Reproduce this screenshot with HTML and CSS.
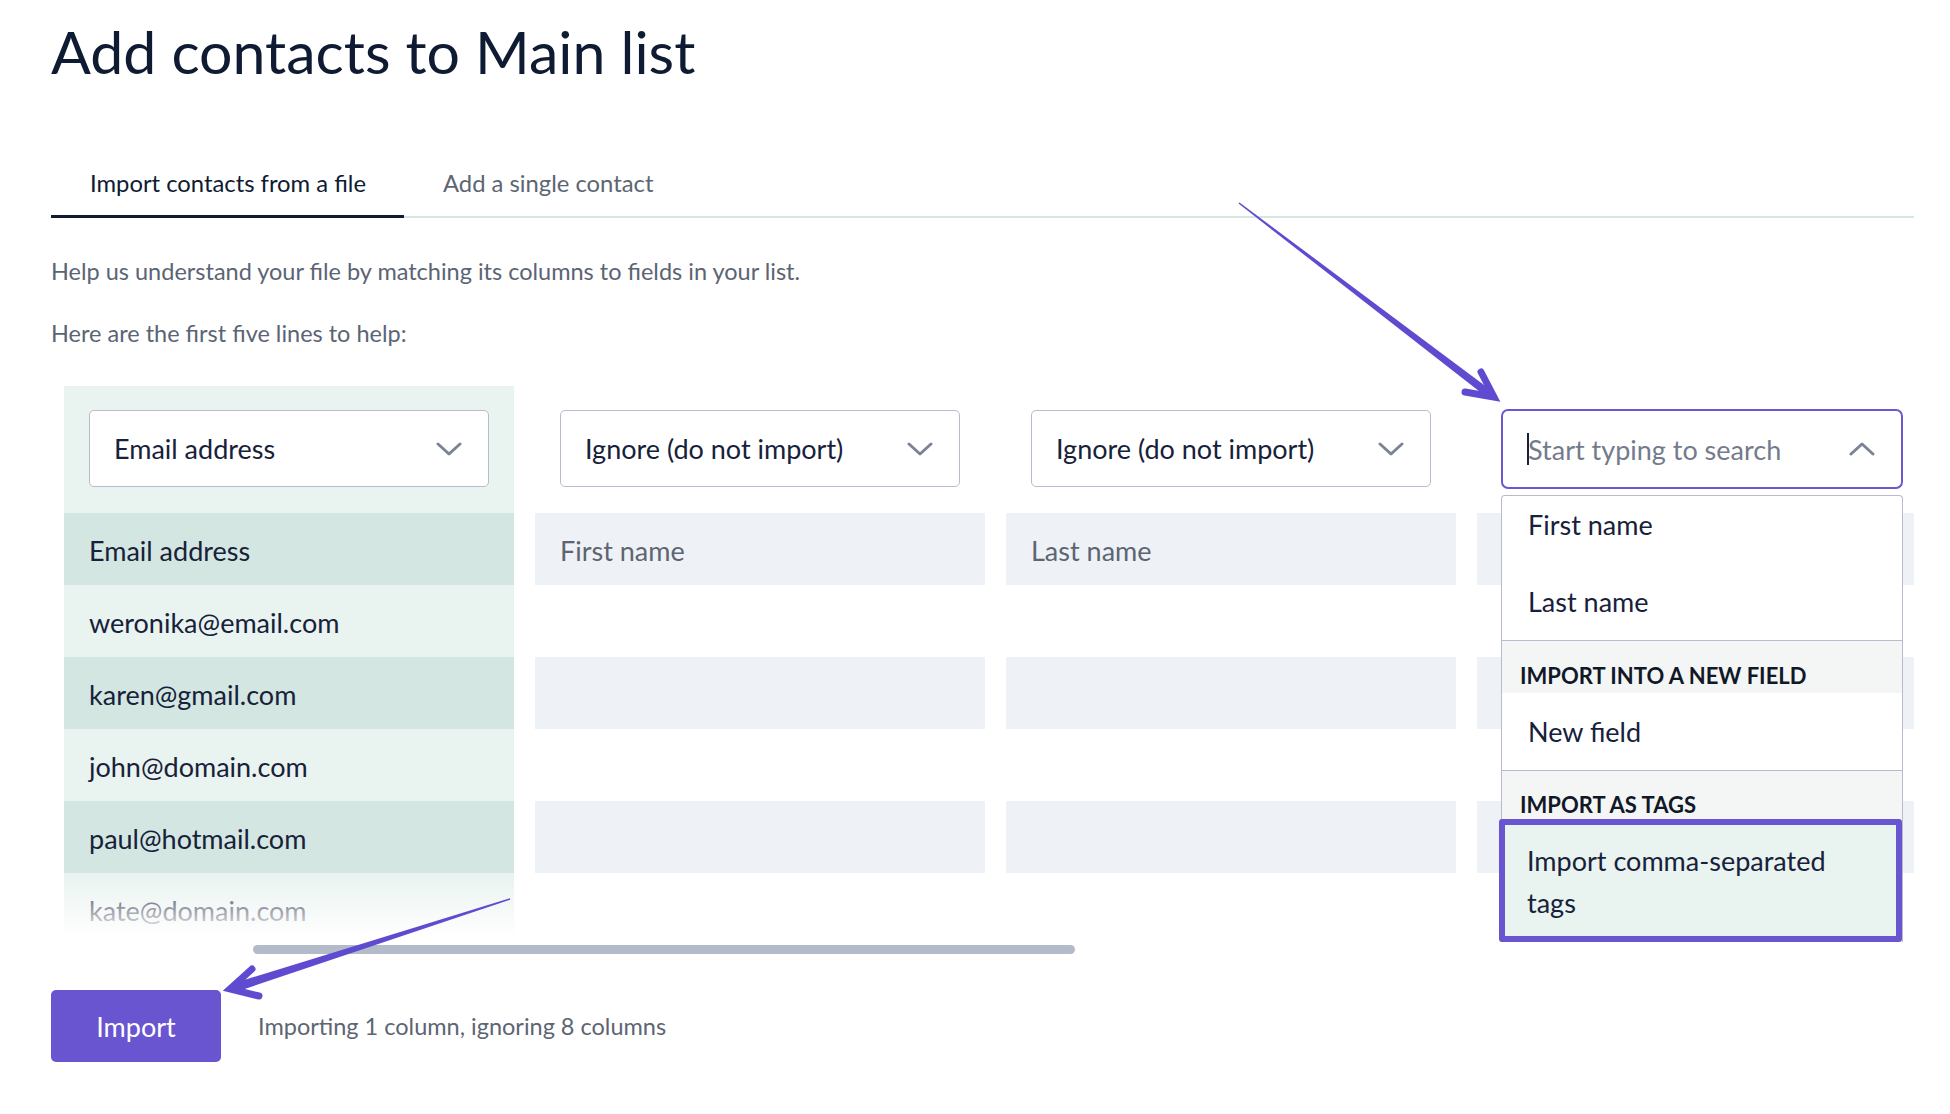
FILE: index.html
```html
<!DOCTYPE html>
<html lang="en">
<head>
  <meta charset="UTF-8">
  <title>Add contacts to Main list</title>
  <link rel="stylesheet" href="styles.css">
</head>
<body>
  <main class="page">
    <h1 class="title">Add contacts to Main list</h1>

    <nav class="tabs">
      <a class="tab tab-active">Import contacts from a file</a>
      <a class="tab">Add a single contact</a>
    </nav>

    <p class="hint">Help us understand your file by matching its columns to fields in your list.</p>
    <p class="hint hint-second">Here are the first five lines to help:</p>

    <div class="mapper">
      <div class="columns">
        <!-- mapped column -->
        <div class="col col-mapped">
          <div class="select">
            <span>Email address</span>
            <svg class="chevron" width="26" height="14" viewBox="0 0 26 14"><polyline points="2,2 13,12 24,2"/></svg>
          </div>
          <div class="cell stripe">Email address</div>
          <div class="cell">weronika@email.com</div>
          <div class="cell stripe">karen@gmail.com</div>
          <div class="cell">john@domain.com</div>
          <div class="cell stripe">paul@hotmail.com</div>
          <div class="cell">kate@domain.com</div>
        </div>

        <div class="col">
          <div class="select">
            <span>Ignore (do not import)</span>
            <svg class="chevron" width="26" height="14" viewBox="0 0 26 14"><polyline points="2,2 13,12 24,2"/></svg>
          </div>
          <div class="cell stripe cell-muted">First name</div>
          <div class="cell"></div>
          <div class="cell stripe"></div>
          <div class="cell"></div>
          <div class="cell stripe"></div>
          <div class="cell"></div>
        </div>

        <div class="col">
          <div class="select">
            <span>Ignore (do not import)</span>
            <svg class="chevron" width="26" height="14" viewBox="0 0 26 14"><polyline points="2,2 13,12 24,2"/></svg>
          </div>
          <div class="cell stripe cell-muted">Last name</div>
          <div class="cell"></div>
          <div class="cell stripe"></div>
          <div class="cell"></div>
          <div class="cell stripe"></div>
          <div class="cell"></div>
        </div>

        <!-- column with open picker -->
        <div class="col col-open">
          <div class="search">
            <span class="caret"></span>
            <span class="placeholder">Start typing to search</span>
            <svg class="chevron" width="26" height="14" viewBox="0 0 26 14"><polyline points="2,12 13,2 24,12"/></svg>
          </div>
          <div class="cell stripe"></div>
          <div class="cell"></div>
          <div class="cell stripe"></div>
          <div class="cell"></div>
          <div class="cell stripe"></div>
          <div class="cell"></div>

          <div class="dropdown">
            <div class="option option-top">First name</div>
            <div class="option option-top option-last">Last name</div>
            <div class="group">Import into a new field</div>
            <div class="option">New field</div>
            <div class="group group-tags">Import as tags</div>
            <div class="option option-active">Import comma-separated<br>tags</div>
          </div>
        </div>
      </div>
      <div class="scrollbar"><div class="thumb"></div></div>
    </div>

    <div class="actions">
      <button class="btn">Import</button>
      <span class="summary">Importing 1 column, ignoring 8 columns</span>
    </div>
  </main>

  <!-- annotation arrows drawn over the page -->
  <svg class="annotations" width="1950" height="1114" viewBox="0 0 1950 1114">
    <polygon points="1238.5,203.6 1239.5,202.4 1490.4,389.8 1485.6,396.2"/>
    <polyline points="1481,372 1494,397 1465,392"/>
    <polygon points="509.8,898.2 510.2,899.8 234.1,992.5 231.3,983.9"/>
    <polyline points="252,969 230,989 259,996"/>
  </svg>
</body>
</html>
```

FILE: styles.css
```css
* { box-sizing: border-box; }
body { margin: 0; background: #fff; font-family: Lato, "Open Sans", sans-serif; color: #17213a; }
.page { padding-left: 51px; position: relative; }

.title { margin: 16px 0 0; font-size: 59px; line-height: 72px; font-weight: 400; color: #0e1b33; }

.tabs {
  display: flex;
  margin-top: 81px;
  width: 1863px;
  border-bottom: 2px solid #d6e7e2;
}
.tab {
  font-size: 23.8px;
  line-height: 28px;
  padding: 0 38px 18px 39px;
  border-bottom: 3px solid transparent;
  margin-bottom: -2px;
  color: #5d6573;
}
.tab-active { color: #0e1b33; border-bottom-color: #0e1b33; }

.hint { margin: 38px 0 0; font-size: 23.5px; line-height: 30px; color: #5b6474; }
.hint-second { margin-top: 32px; }

.mapper { margin: 38px 0 0 13px; width: 1850px; }
.columns { display: flex; gap: 21px; overflow: hidden; position: relative; }
.columns::after {
  content: '';
  position: absolute;
  left: 0; right: 0; bottom: 0;
  height: 72px;
  background: linear-gradient(rgba(255,255,255,0), #fff 90%);
  z-index: 1;
}

.col { flex: 0 0 450px; padding-top: 24px; position: relative; }
.col-mapped { background: #e9f3f0; }

.select {
  display: flex;
  align-items: center;
  justify-content: space-between;
  margin: 0 25px 26px;
  height: 77px;
  padding: 0 26px 0 24px;
  background: #fff;
  border: 1px solid #b6bccb;
  border-radius: 5px;
  font-size: 27px;
}
.chevron { fill: none; stroke: #7b8494; stroke-width: 3; stroke-linecap: round; stroke-linejoin: round; }

.cell { height: 72px; padding: 3px 25px 0; font-size: 27px; line-height: 69px; white-space: nowrap; }
.cell.stripe { background: #eef2f6; }
.col-mapped .cell.stripe { background: #d3e6e1; }
.cell-muted { color: #5d6573; }

.search {
  display: flex;
  align-items: center;
  width: 402px;
  height: 80px;
  margin: -1px 0 24px 24px;
  padding: 0 26px 0 24px;
  border: 2px solid #6b58d3;
  border-radius: 7px;
  background: #fff;
  font-size: 27px;
}
.caret { width: 2px; height: 32px; background: #17213a; margin-right: -1px; }
.placeholder { flex: 1; color: #737b8c; }

.dropdown {
  position: absolute;
  top: 109px;
  left: 24px;
  width: 402px;
  background: #fff;
  border: 1px solid #b6bccb;
  border-bottom: none;
  border-radius: 4px 4px 0 0;
  z-index: 2;
}
.option { padding: 19px 26px; font-size: 27px; line-height: 39px; }
.option-top { padding-top: 9px; padding-bottom: 29px; }
.option-last { padding-bottom: 19px; }
.group {
  background: #f4f6f6;
  border-top: 1px solid #b6bccb;
  padding: 23px 18px 5px;
  font-size: 22px;
  line-height: 24px;
  font-weight: 700;
  text-transform: uppercase;
  color: #111827;
}
.group-tags { padding: 22px 18px 2px; }
.option-active {
  margin-left: -3px;
  padding: 15px 20px 12px 22px;
  line-height: 42px;
  background: #e9f3f0;
  border: 6px solid #6a55d0;
  border-radius: 3px;
}

.scrollbar { height: 9px; }
.thumb { margin-left: 189px; width: 822px; height: 9px; border-radius: 5px; background: #b3bac9; }

.actions { display: flex; align-items: center; margin-top: 36px; }
.btn {
  width: 170px;
  height: 72px;
  border: none;
  border-radius: 5px;
  background: #6a55d0;
  color: #fff;
  font-family: inherit;
  font-size: 27px;
}
.summary { margin-left: 37px; font-size: 23.5px; color: #5d6573; }

.annotations { position: absolute; top: 0; left: 0; pointer-events: none; z-index: 10; }
.annotations polygon { fill: #5f4bd0; }
.annotations polyline { fill: none; stroke: #5f4bd0; stroke-width: 7; stroke-linecap: round; stroke-linejoin: miter; }
```
